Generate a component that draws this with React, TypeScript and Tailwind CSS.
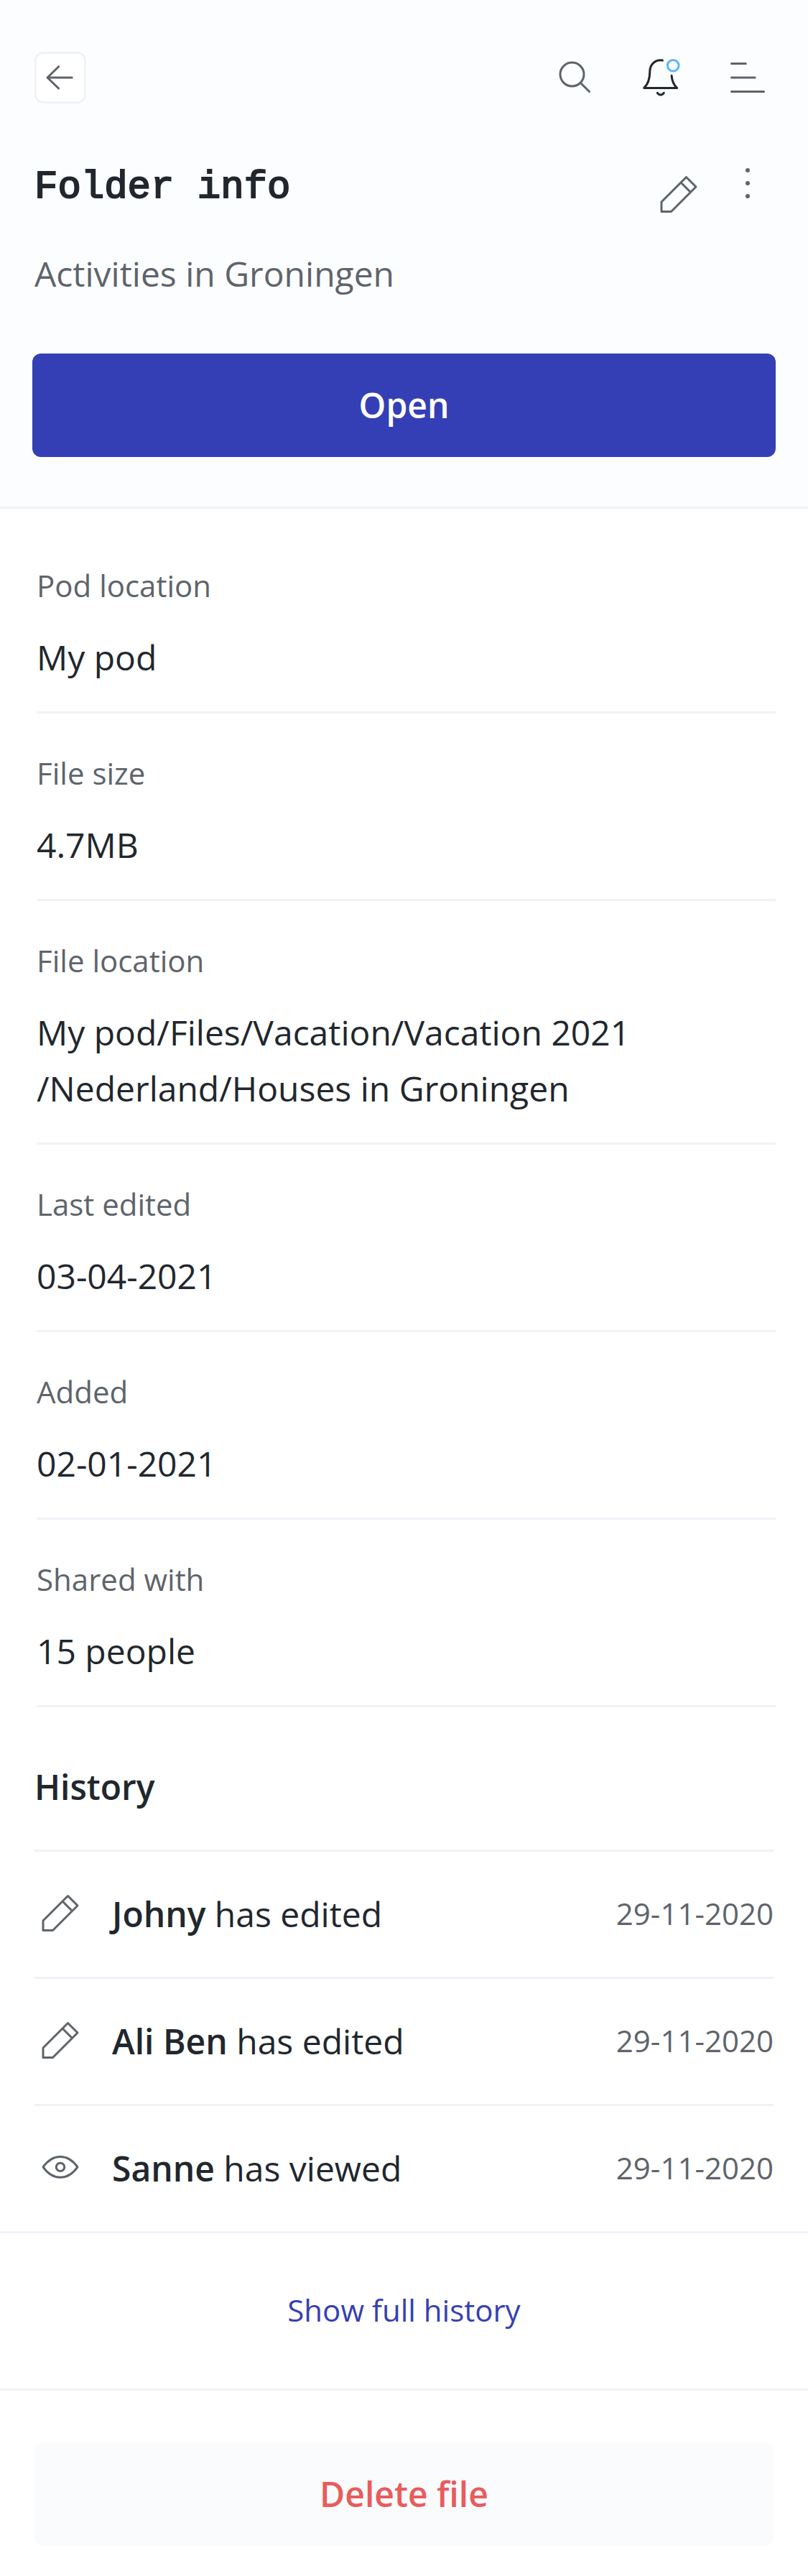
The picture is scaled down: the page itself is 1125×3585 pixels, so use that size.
import type { ReactNode } from "react";

function Icon({ children, className = "" }: { children: ReactNode; className?: string }) {
  return (
    <svg
      viewBox="0 0 24 24"
      className={`size-18 shrink-0 ${className}`}
      fill="none"
      stroke="currentColor"
      strokeWidth="1"
      strokeLinecap="round"
      strokeLinejoin="round"
      aria-hidden="true"
    >
      {children}
    </svg>
  );
}

function PencilIcon() {
  return (
    <Icon>
      <path d="M4 15v4.5h4.5L20 8l-4.5-4.5zM13 6l4.5 4.5" />
    </Icon>
  );
}

function EyeIcon() {
  return (
    <Icon>
      <path d="M4 11.3C6.2 8.2 9 6.5 12 6.5s5.8 1.7 8 4.8c-2.2 3.1-5 4.8-8 4.8s-5.8-1.7-8-4.8z" />
      <circle cx="12" cy="11.3" r="1.9" />
    </Icon>
  );
}

const details = [
  { label: "Pod location", value: "My pod" },
  { label: "File size", value: "4.7MB" },
  { label: "File location", value: "My pod/Files/Vacation/Vacation 2021 /Nederland/Houses in Groningen" },
  { label: "Last edited", value: "03-04-2021" },
  { label: "Added", value: "02-01-2021" },
  { label: "Shared with", value: "15 people" },
];

const history = [
  { name: "Johny", action: "has edited", date: "29-11-2020", icon: <PencilIcon /> },
  { name: "Ali Ben", action: "has edited", date: "29-11-2020", icon: <PencilIcon /> },
  { name: "Sanne", action: "has viewed", date: "29-11-2020", icon: <EyeIcon /> },
];

export default function App() {
  return (
    <div className="bg-white font-['Open_Sans',sans-serif] text-[48px] leading-[78px] text-[#21272d]">
      <header className="border-b-3 border-[#eff3f7] bg-[#fcfdff] pt-18 pb-[69px]">
        <nav className="flex items-center justify-between px-12 text-[#5e646b]">
          <button
            type="button"
            aria-label="Back"
            className="size-18 rounded-xl border-3 border-[#f0f3f6] bg-white"
          >
            <svg
              viewBox="1 1 22 22"
              className="size-full"
              fill="none"
              stroke="currentColor"
              strokeWidth="1"
              strokeLinecap="round"
              strokeLinejoin="round"
              aria-hidden="true"
            >
              <path d="M17.4 12H6M11.2 6.9 6 12l5.2 5" />
            </svg>
          </button>
          <div className="flex gap-12">
            <button type="button" aria-label="Search">
              <Icon>
                <circle cx="10.5" cy="10.5" r="5.5" />
                <path d="m14.5 14.5 4 4" />
              </Icon>
            </button>
            <button type="button" aria-label="Notifications" className="text-[#21272d]">
              <Icon>
                <path d="M12.5 4C9 3.6 6.6 5.9 6.6 9.2 6.6 12.5 6 14.9 3.9 16.8h15.3c-1.5-1.4-2.3-3.2-2.5-5.7M10.1 19.1c.7 1.2 2.3 1.2 3 0" />
                <circle cx="17.4" cy="6.4" r="2.6" stroke="#57b7ff" />
              </Icon>
            </button>
            <button type="button" aria-label="Menu">
              <Icon>
                <path d="M4.5 5.5h6.6M4.5 12h10.9M4.5 18.5h15" />
              </Icon>
            </button>
          </div>
        </nav>

        <div className="mt-[75px] flex items-start justify-between px-12">
          <h1 className="pt-1.5 font-['Liberation_Mono',monospace] text-[54px] leading-[72px] font-normal [-webkit-text-stroke:2px_#21272d]">
            Folder info
          </h1>
          <div className="flex items-start gap-6 text-[#5e646b]">
            <button type="button" aria-label="Edit" className="pt-[17px]">
              <PencilIcon />
            </button>
            <button type="button" aria-label="More options">
              <Icon>
                <g fill="currentColor" stroke="none">
                  <circle cx="12" cy="6" r="1" />
                  <circle cx="12" cy="12" r="1" />
                  <circle cx="12" cy="18" r="1" />
                </g>
              </Icon>
            </button>
          </div>
        </div>
        <p className="mt-[34px] px-12 text-[#5e646b]">Activities in Groningen</p>
        <div className="mt-18 px-[45px]">
          <button type="button" className="block h-36 w-full rounded-xl bg-[#353fb5] font-semibold text-white">
            Open
          </button>
        </div>
      </header>

      <main>
        <dl className="mr-[45px] ml-[51px] pt-6">
          {details.map(({ label, value }) => (
            <div key={label} className="border-b-3 border-[#eff3f7] pt-[51px] pb-9">
              <dt className="text-[42px] leading-[63px] text-[#5e646b]">{label}</dt>
              <dd className="mt-[30px] max-w-[900px]">{value}</dd>
            </div>
          ))}
        </dl>

        <section className="px-12 pt-18">
          <h2 className="pb-12 font-semibold">History</h2>
          <ul>
            {history.map(({ name, action, date, icon }) => (
              <li key={name} className="flex h-[177px] items-center border-t-3 border-[#eff3f7]">
                <span className="text-[#5e646b]">{icon}</span>
                <span className="ml-9 flex-1">
                  <b className="font-semibold">{name}</b> {action}
                </span>
                <time className="pb-1 text-[42px] leading-[63px] text-[#5e646b]">{date}</time>
              </li>
            ))}
          </ul>
        </section>

        <div className="flex h-[222px] items-center justify-center border-y-3 border-[#eff3f7] pb-1">
          <a href="#history" className="text-[42px] leading-[63px] text-[#353fb5]">
            Show full history
          </a>
        </div>

        <div className="px-12 pt-18 pb-[42px]">
          <button type="button" className="block h-36 w-full rounded-xl bg-[#fafbfd] font-semibold text-[#e85c5c]">
            Delete file
          </button>
        </div>
      </main>
    </div>
  );
}
